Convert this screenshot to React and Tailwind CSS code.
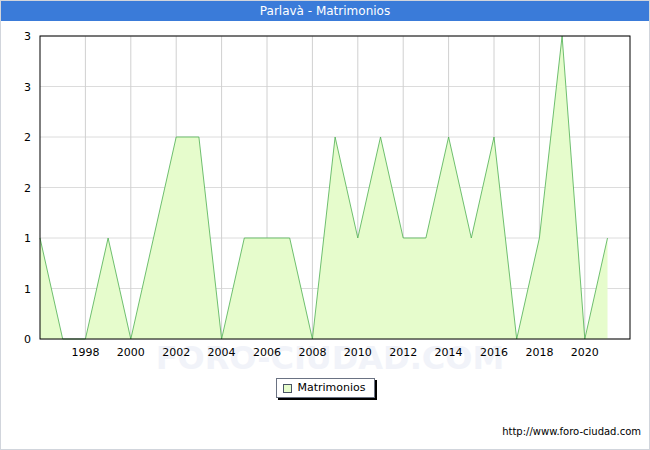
const data = [1,0,0,1,0,1,2,2,0,1,1,1,0,2,1,2,1,1,2,1,2,0,1,3,0,1];
const X0 = 40, X1 = 630, Y0 = 35, Y1 = 338;
const dx = 22.7;
const yOf = (v) => Y1 - v * ((Y1 - Y0) / 3);

export default function App() {
  const pts = data.map((v, i) => `${X0 + i * dx},${yOf(v)}`).join(" ");
  const area = `${X0},${Y1} ${pts} ${X0 + 25 * dx},${Y1}`;
  const hLines = [0, 0.5, 1, 1.5, 2, 2.5, 3];
  const yLabels = ["0", "1", "1", "2", "2", "3", "3"];
  const years = [1998,2000,2002,2004,2006,2008,2010,2012,2014,2016,2018,2020];
  return (
    <div className="w-[650px] h-[450px] bg-white border border-gray-300 flex flex-col" style={{ fontFamily: "'DejaVu Sans', sans-serif" }}>
      <div className="h-[20px] bg-[#3a7bd9] text-white text-[12px] flex items-center justify-center shrink-0">
        Parlavà - Matrimonios
      </div>
      <svg width="650" height="352" viewBox="0 20 650 352" className="shrink-0 -ml-px">
        {hLines.map((v, i) => (
          <line key={i} x1={X0} x2={X1} y1={yOf(v)} y2={yOf(v)} stroke="#dcdcdc" />
        ))}
        {years.map((y) => {
          const x = X0 + (y - 1996) * dx;
          return <line key={y} x1={x} x2={x} y1={Y0} y2={Y1} stroke="#d0d0d0" />;
        })}
        <text x="330" y="368" textAnchor="middle" fontSize="32" fill="#f1f3f9" fontWeight="bold">FORO-CIUDAD.COM</text>
        <polygon points={area} fill="#e6fccc" />
        <polyline points={pts} fill="none" stroke="#4caf50" strokeWidth="0.8" />
        <rect x={X0} y={Y0} width={X1 - X0} height={Y1 - Y0} fill="none" stroke="#000" />
        {hLines.map((v, i) => (
          <text key={i} x="31" y={yOf(v) + 4} textAnchor="end" fontSize="11" fill="#000">{yLabels[i]}</text>
        ))}
        {years.map((y) => (
          <text key={y} x={X0 + (y - 1996) * dx} y="355" textAnchor="middle" fontSize="11" fill="#000">{y}</text>
        ))}
      </svg>
      <div className="flex justify-center mt-[5px]">
        <div className="flex items-center gap-[6px] border border-gray-500 shadow-[2px_2px_0_#000] px-[6px] h-[20px] text-[11px] w-[99px]">
          <span className="w-[9px] h-[9px] bg-[#e6fccc] border border-gray-600"></span>
          Matrimonios
        </div>
      </div>
      <div className="mt-auto mb-[10px] pr-[8px] text-right text-[10px]">http://www.foro-ciudad.com</div>
    </div>
  );
}
